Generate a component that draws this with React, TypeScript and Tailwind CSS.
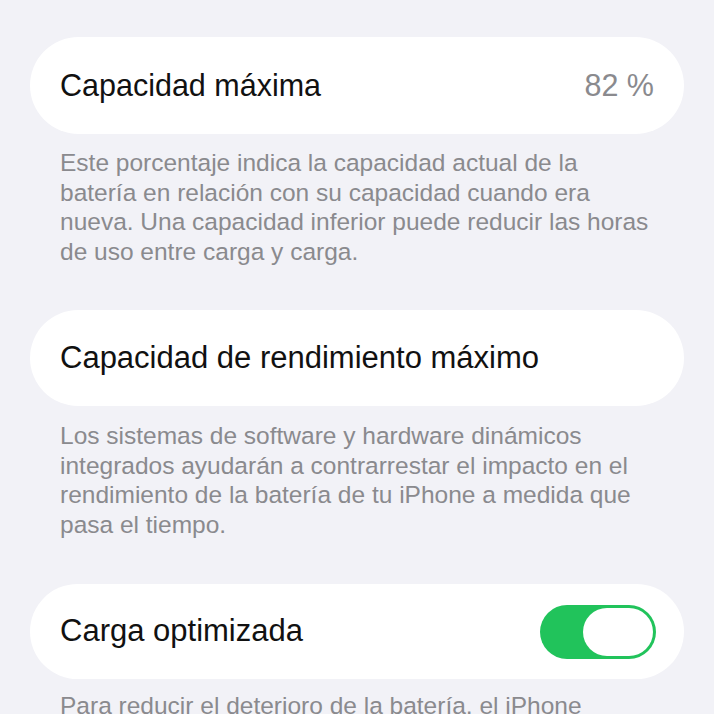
export default function App() {
  return (
    <main
      className="min-h-screen w-[714px] h-[714px] overflow-hidden bg-[#f2f2f7] px-[30px] pt-[37px]"
      style={{ fontFamily: '"Liberation Sans", Arial, sans-serif' }}
    >
      <section>
        <div className="flex h-[97px] items-center justify-between rounded-full bg-white px-[30px]">
          <span className="text-[30.5px] text-[#111]">Capacidad máxima</span>
          <span className="text-[30.5px] text-[#8a8a8e]">82 %</span>
        </div>
        <p className="mt-[14px] whitespace-nowrap px-[30px] text-[24.5px] leading-[29.5px] text-[#8a8a8e]">
          Este porcentaje indica la capacidad actual de la
          <br />
          batería en relación con su capacidad cuando era
          <br />
          nueva. Una capacidad inferior puede reducir las horas
          <br />
          de uso entre carga y carga.
        </p>
      </section>

      <section className="mt-[44px]">
        <div className="flex h-[96px] items-center rounded-full bg-white px-[30px]">
          <span className="text-[31px] text-[#111]">Capacidad de rendimiento máximo</span>
        </div>
        <p className="mt-[15px] whitespace-nowrap px-[30px] text-[24.5px] leading-[29.5px] text-[#8a8a8e]">
          Los sistemas de software y hardware dinámicos
          <br />
          integrados ayudarán a contrarrestar el impacto en el
          <br />
          rendimiento de la batería de tu iPhone a medida que
          <br />
          pasa el tiempo.
        </p>
      </section>

      <section className="mt-[45px]">
        <div className="flex h-[95px] items-center justify-between rounded-full bg-white pl-[30px] pr-[28px]">
          <span className="text-[31px] text-[#111]">Carga optimizada</span>
          <div className="flex h-[54px] w-[116px] items-center justify-end rounded-full bg-[#21c35b] p-[3px]">
            <div className="h-[48px] w-[70px] rounded-full bg-white" />
          </div>
        </div>
        <p className="mt-[12px] whitespace-nowrap px-[30px] text-[24.5px] leading-[29.5px] text-[#8a8a8e]">
          Para reducir el deterioro de la batería, el iPhone
        </p>
      </section>
    </main>
  );
}
